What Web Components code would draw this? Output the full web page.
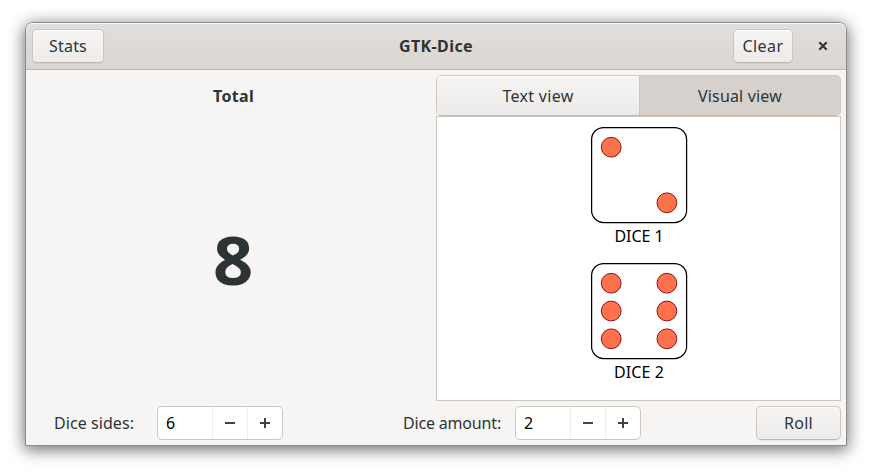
<!DOCTYPE html>
<html lang="en">
<head>
<meta charset="utf-8">
<title>GTK-Dice</title>
<style>
html,body{margin:0;background:#fff}
body{width:872px;height:474px;overflow:hidden;box-sizing:border-box;padding:22px 25px 28px;font:16px/20px "Noto Sans",sans-serif;color:#2e3436}
</style>
</head>
<body>
<dice-window></dice-window>
<script>
function define(name, html, setup) {
  const t = document.createElement('template');
  t.innerHTML = html;
  customElements.define(name, class extends HTMLElement {
    constructor() {
      super();
      this.attachShadow({mode: 'open'}).append(t.content.cloneNode(true));
    }
    connectedCallback() { if (setup) setup(this, this.shadowRoot); }
  });
}

/* Text run fitted to a fixed advance width */
define('ui-text', `<style>
:host{display:block;white-space:pre;flex:none}
span{display:inline-block;white-space:pre}
</style><span><slot></slot></span>`, (el, root) => {
  const want = parseFloat(el.getAttribute('w'));
  const span = root.querySelector('span');
  const n = el.textContent.length;
  const have = span.getBoundingClientRect().width;
  if (want && have) {
    const s = (want - have) / n;
    span.style.letterSpacing = s + 'px';
  }
});

define('ui-button', `<style>
:host{display:flex;box-sizing:border-box;height:34px;align-items:center;justify-content:center;border:1px solid #cdc7c2;border-bottom-color:#bfb8b1;border-radius:5px;background:linear-gradient(#f6f5f4,#edebe9);box-shadow:inset 0 1px #fdfdfc,0 1px 1px rgba(0,0,0,.06)}
</style><slot></slot>`);

define('header-bar', `<style>
:host{display:grid;grid-template-columns:1fr auto 1fr;align-items:center;box-sizing:border-box;height:47px;padding:0 6px;border-bottom:1px solid #bfb8b1;border-radius:7px 7px 0 0;background:linear-gradient(#e1dedb,#dad6d2);box-shadow:inset 0 1px #f9f8f8}
.end{display:flex;justify-content:flex-end;align-items:center;gap:13px}
.close{width:34px;height:34px;display:flex;align-items:center;justify-content:center}
svg{display:block}
</style><div><slot name="start"></slot></div><slot name="title"></slot><div class="end"><slot name="end"></slot><div class="close"><svg width="10" height="10" viewBox="0 0 10 10"><path d="M1.3 1.3 8.7 8.7M8.7 1.3 1.3 8.7" stroke="#2e3436" stroke-width="2.1" fill="none"/></svg></div></div>`);

define('view-switcher', `<style>
:host{display:flex;box-sizing:border-box;height:41px;border:1px solid #cdc7c2;border-bottom-color:#bfb8b1;border-radius:5px;overflow:hidden}
div{display:flex;align-items:center;justify-content:center;box-sizing:border-box}
.a{width:202px;background:linear-gradient(#f6f5f4,#edebe9);box-shadow:inset 0 1px #fdfdfc}
.b{flex:1;background:#d6d1cd;border-left:1px solid #cdc7c2}
</style><div class="a"><slot name="first"></slot></div><div class="b"><slot name="second"></slot></div>`);

define('dice-face', `<style>
:host{display:flex;flex-direction:column;align-items:center;color:#000;height:136px}
svg{display:block;margin-bottom:2px}
::slotted(*){padding-left:1px}
</style><svg width="98" height="98" viewBox="0 0 98 98"><rect x="1.6" y="1.5" width="95" height="95" rx="12" fill="#fff" stroke="#000" stroke-width="1.25"/><g fill="#ff724c" stroke="#87161c" stroke-width="1"></g></svg><slot></slot>`, (el, root) => {
  const spots = {2: [[0,0],[1,2]], 6: [[0,0],[1,0],[0,1],[1,1],[0,2],[1,2]]};
  root.querySelector('g').innerHTML = spots[el.getAttribute('value')]
    .map(([x, y]) => `<circle cx="${21.2 + x * 55.7}" cy="${21.2 + y * 27.8}" r="9.9"/>`).join('');
});

define('spin-button', `<style>
:host{display:flex;box-sizing:border-box;width:126px;height:34px;border:1px solid #cdc7c2;border-radius:5px;background:#fff;color:#000}
div{box-sizing:border-box;display:flex;align-items:center;justify-content:center;width:35px;border-left:1px solid #edebe9}
.v{width:54px;border:0;justify-content:flex-start;padding-left:8px}
svg{display:block}
</style><div class="v"><slot></slot></div>
<div><svg width="10" height="10"><path d="M0 4h10v2H0z" fill="#3e4446"/></svg></div>
<div><svg width="10" height="10"><path d="M0 4h10v2H0zM4 0h2v10H4z" fill="#3e4446"/></svg></div>`);

define('dice-window', `<style>
:host{display:flex;flex-direction:column;box-sizing:border-box;width:822px;height:424px;border:1px solid #8b8c8b;border-radius:8px 8px 0 0;background:#f6f5f4;box-shadow:0 3px 16px 1px rgba(0,0,0,.56)}
header-bar{flex:none}
main{display:flex;height:332px;padding:5px 5px 0;box-sizing:border-box;flex:none}
.total{width:405px;display:flex;flex-direction:column;align-items:center;font-weight:700;box-sizing:border-box}
.label{height:41px;display:flex;align-items:center}
.num{flex:1;display:flex;align-items:center;font-size:67px;line-height:80px;transform:scaleX(1.05)}
.views{width:405px}
.canvas{box-sizing:border-box;height:285px;border:1px solid #cdc7c2;background:#fff;padding-top:9px}
footer{display:flex;align-items:center;height:41px;padding:0 5px 0 28px}
</style>
<header-bar>
<ui-button slot="start" style="width:72px"><ui-text w="38">Stats</ui-text></ui-button>
<ui-text slot="title" w="74" style="font-weight:700">GTK-Dice</ui-text>
<ui-button slot="end" style="width:60px"><ui-text w="41">Clear</ui-text></ui-button>
</header-bar>
<main>
<section class="total"><div class="label"><ui-text w="41">Total</ui-text></div><div class="num">8</div></section>
<section class="views">
<view-switcher><ui-text slot="first" w="71">Text view</ui-text><ui-text slot="second" w="84">Visual view</ui-text></view-switcher>
<div class="canvas"><dice-face value="2"><ui-text w="49">DICE 1</ui-text></dice-face><dice-face value="6"><ui-text w="50">DICE 2</ui-text></dice-face></div>
</section>
</main>
<footer>
<ui-text w="80" style="margin-right:23px">Dice sides:</ui-text><spin-button>6</spin-button>
<ui-text w="98" style="margin-left:120px;margin-right:14px">Dice amount:</ui-text><spin-button>2</spin-button>
<ui-button style="width:85px;margin-left:auto"><ui-text w="29">Roll</ui-text></ui-button>
</footer>`);
</script>
</body>
</html>
